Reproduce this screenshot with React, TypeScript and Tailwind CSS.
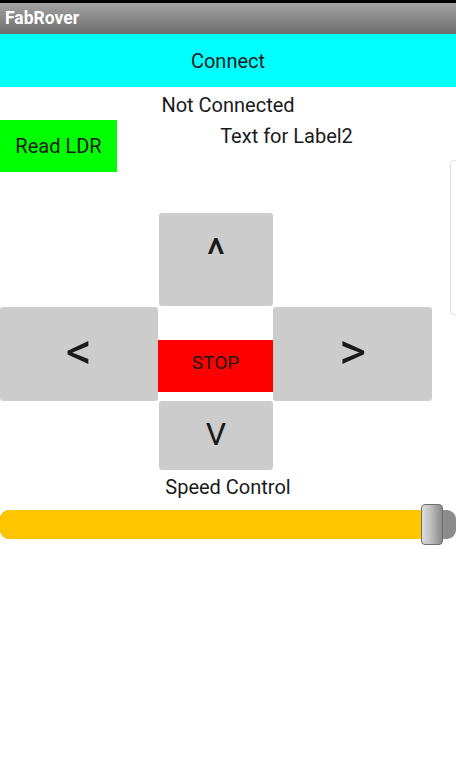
export default function App() {
  return (
    <div
      className="relative w-[456px] h-[782px] bg-white overflow-hidden text-[#1a1a1a]"
      style={{ fontFamily: 'Roboto, "Liberation Sans", sans-serif' }}
    >
      <div className="h-[3px] bg-black" />
      <div className="h-[31px] bg-gradient-to-b from-[#a3a3a3] to-[#6d6d6d] flex items-center pl-[5px] text-white font-bold text-[17.5px]">
        FabRover
      </div>
      <div className="h-[53px] bg-[#00ffff] flex items-center justify-center text-[20px]">Connect</div>
      <div className="h-[33px] flex items-center justify-center text-[20px] pt-[3px]">Not Connected</div>

      <div className="flex h-[52px]">
        <div className="w-[117px] bg-[#00ff00] flex items-center justify-center text-[20px]">Read LDR</div>
        <div className="flex-1 text-center text-[20px] pt-[3px] leading-[26px]">Text for Label2</div>
      </div>

      {/* d-pad */}
      <div className="mt-[41px]">
        <div className="flex">
          <div className="ml-[159px] w-[114px] h-[93px] bg-[#cccccc] rounded-[3px] flex justify-center pt-[19px] text-[45px] leading-none">
            ^
          </div>
        </div>
        <div className="flex mt-[1px] h-[94px]">
          <div className="w-[158px] bg-[#cccccc] rounded-[3px] flex items-center justify-center text-[52px] leading-none pb-[4px]">&lt;</div>
          <div className="w-[115px] flex flex-col">
            <div className="h-[33px]" />
            <div className="h-[52px] bg-[#ff0000] flex items-center justify-center text-[19px] pb-[5px]">STOP</div>
          </div>
          <div className="w-[159px] bg-[#cccccc] rounded-[3px] flex items-center justify-center text-[52px] leading-none pb-[4px]">&gt;</div>
        </div>
        <div className="flex">
          <div className="ml-[159px] w-[114px] h-[69px] bg-[#cccccc] rounded-[3px] flex items-center justify-center text-[32px] pb-[4px]">
            V
          </div>
        </div>
      </div>

      <div className="h-[34px] flex items-center justify-center text-[20px]">Speed Control</div>

      {/* slider */}
      <div className="relative h-[41px]">
        <div className="absolute left-0 right-0 top-[6px] h-[29px] rounded-[9px] bg-[#8c8c8c]" />
        <div className="absolute left-0 w-[440px] top-[6px] h-[29px] rounded-l-[9px] bg-[#ffc600]" />
        <div className="absolute left-[421px] top-0 w-[22px] h-[41px] rounded-[4px] border border-[#6f6f6f] bg-gradient-to-r from-[#dcdcdc] via-[#b9b9b9] to-[#8a8a8a]" />
      </div>

      {/* side scroll outline */}
      <div className="absolute left-[450px] top-[160px] w-[12px] h-[155px] rounded-[4px] border border-[#e2e2e2]" />
    </div>
  );
}
